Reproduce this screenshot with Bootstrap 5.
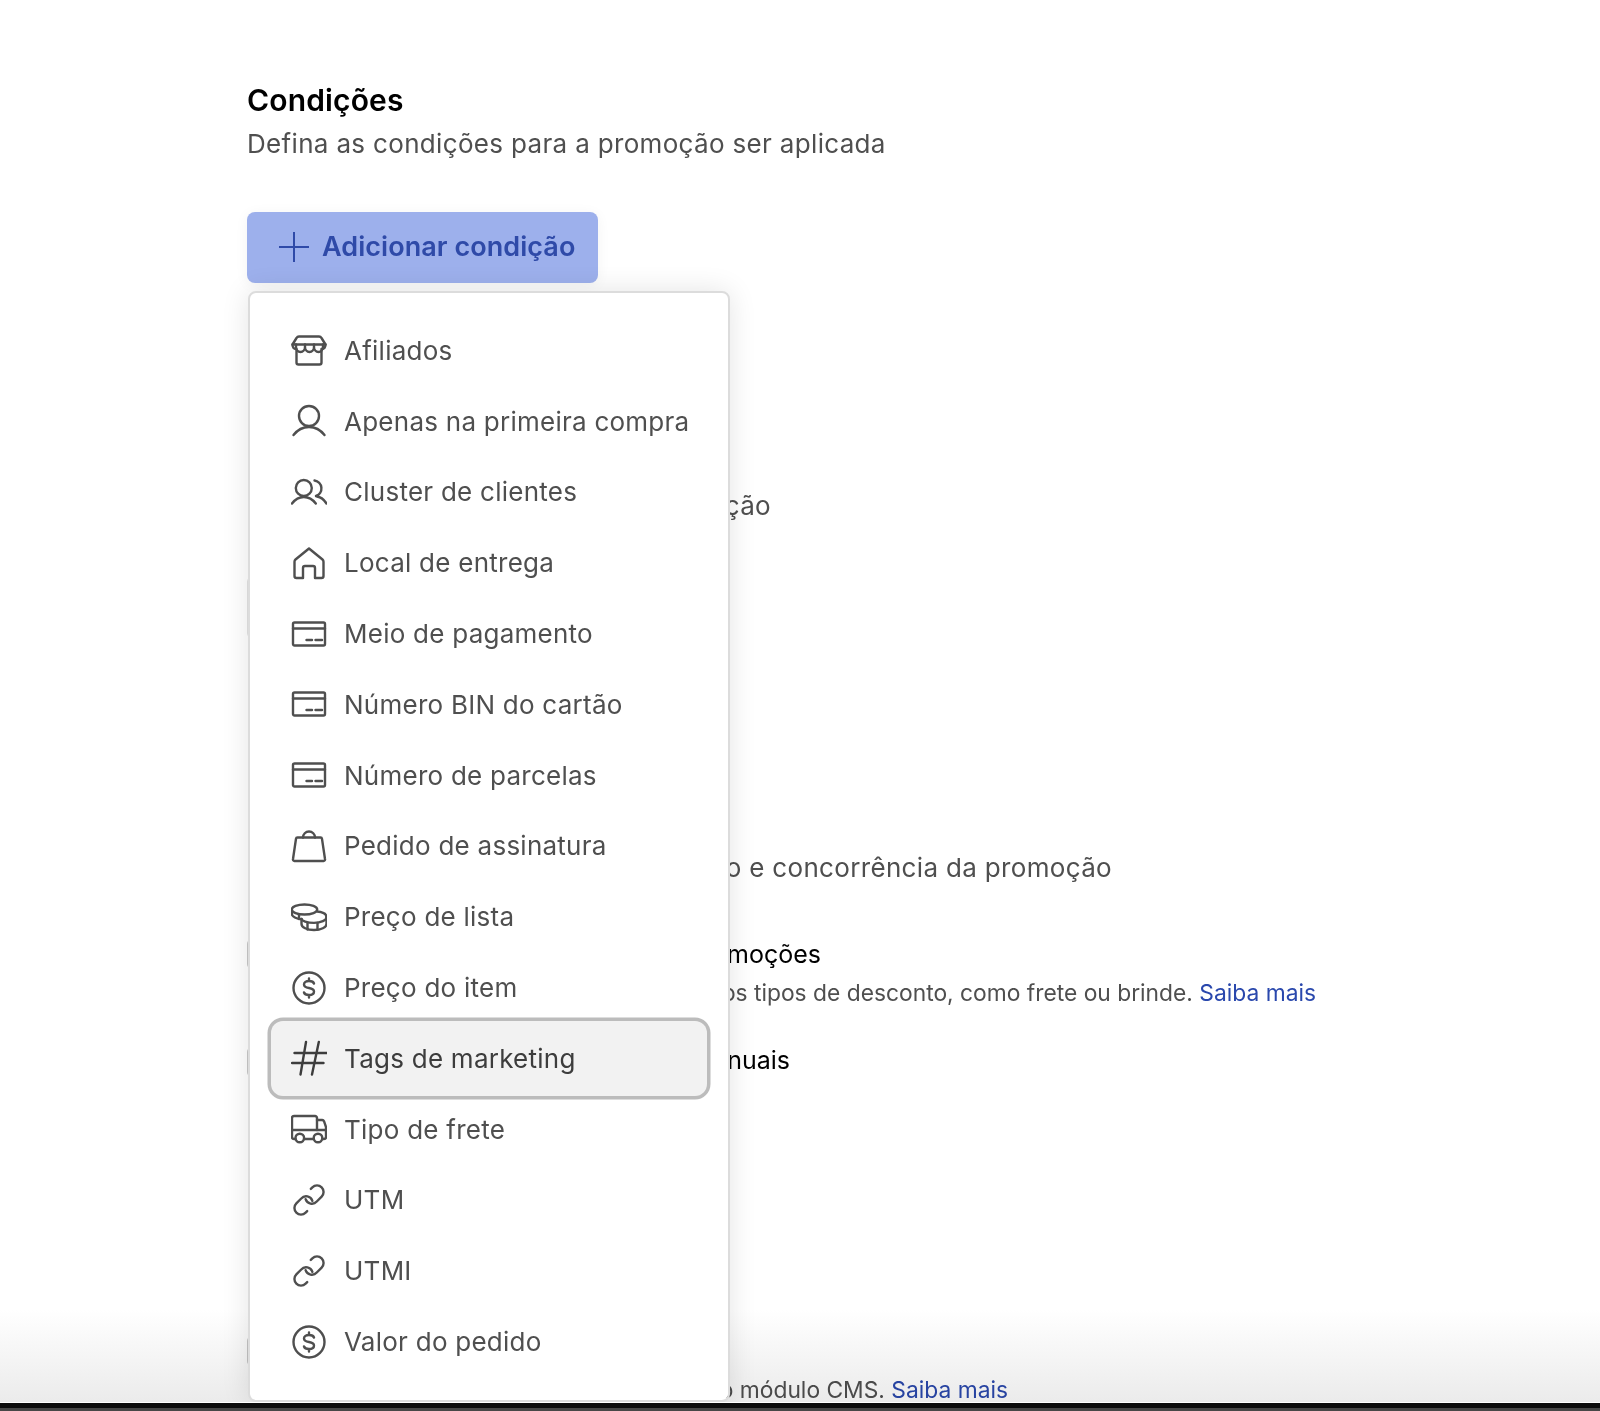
<!DOCTYPE html>
<html lang="pt-BR">
<head>
    <meta charset="UTF-8">
    <meta name="viewport" content="width=device-width, initial-scale=1.0">
    <title>Condições</title>
    <link href="https://cdn.jsdelivr.net/npm/bootstrap@5.3.0/dist/css/bootstrap.min.css" rel="stylesheet">
    <style>
        html, body { height: 100%; }
        body {
            font-family: "Inter", "Liberation Sans", sans-serif;
            color: #000;
            overflow: hidden;
        }
        .page-shell { height: 1411px; }
        .page-main { padding: 82px 0 0 247px; overflow: hidden; }
        .sec-title { font-size: 30px; line-height: 36px; font-weight: 600; letter-spacing: .15px; margin: 0; }
        .sec-sub { font-size: 26px; line-height: 36px; letter-spacing: .33px; color: #4f4f4f; margin: 8px 0 0; white-space: nowrap; }
        .add-wrap { margin-top: 50px; width: 351px; height: 71px; }
        .add-btn {
            width: 351px; height: 71px; padding: 0 0 1px 32px; gap: 13px;
            background: #9db0ec; border: 0; border-radius: 8px;
            color: #2f4aa8; font-size: 27px; font-weight: 600; letter-spacing: .05px;
            box-shadow: 0 2px 14px rgba(0,0,0,.05);
        }
        .cond-menu {
            top: 79px; left: 1px; width: 482px; height: 1111px;
            padding: 22px 23.5px 21px 22.5px; border: 2px solid #dcdcdc; border-radius: 8px;
            box-shadow: 0 0 28px rgba(0,0,0,.11);
            display: block;
        }
        .cond-item {
            height: 70.8px; padding: 0 0 0 18px; gap: 17.5px;
            color: #4f4f4f; font-size: 26px; letter-spacing: .25px; border-radius: 10px;
        }
        .cond-item svg { width: 36px; height: 36px; flex: none; fill: none; stroke: currentColor; stroke-width: 2.4; stroke-linecap: round; stroke-linejoin: round; }
        .cond-item.is-on {
            background: #f2f2f2; color: #3d3d3d;
            box-shadow: 0 0 0 2px #f2f2f2, 0 0 0 5.5px #bcbcbc;
        }
        .under-line { white-space: nowrap; overflow: hidden; text-align: right; }
        .under-title { font-size: 25px; line-height: 36px; color: #000; }
        .under-note { font-size: 22.8px; line-height: 32px; color: #4f4f4f; }
        .under-note a { color: #2a48ad; text-decoration: none; }
        .fake-input { width: 400px; height: 63px; margin-top: 52px; border: 2px solid #e3e3e3; border-radius: 6px; }
        .fake-check { width: 30px; height: 30px; border: 2px solid #c9c9c9; border-radius: 5px; flex: none; }
        .under-dur { width: 524px; margin-top: 205px; }
        .under-conc { width: 865px; margin-top: 211px; }
        .row-acum { margin-top: 50px; }
        .row-acum .fake-check { margin-top: 3px; }
        .row-acum .under-title { width: 528px; }
        .row-acum .under-note { width: 1023px; margin-top: 5px; }
        .row-manual { margin-top: 33px; }
        .row-manual .fake-check { margin-top: 5px; }
        .row-manual .under-title { width: 497px; }
        .row-cms { margin-top: 258px; }
        .row-cms .under-title { width: 200px; }
        .row-cms .under-note { width: 715px; margin-top: 7px; line-height: 22px; }
        .bottom-fade {
            left: 0; right: 0; bottom: 0; height: 92px;
            background: linear-gradient(to bottom, #fff, #ebebeb);
            mix-blend-mode: multiply;
            pointer-events: none;
        }
        .screen-edge { height: 9px; flex: none; background: linear-gradient(to bottom, #fff 0, #fff 1px, #0c0c0c 1px, #0c0c0c 6px, #474747 6px); }
    </style>
</head>
<body>
    <svg class="d-none" xmlns="http://www.w3.org/2000/svg">
        <symbol id="i-store" viewBox="0 0 36 36">
            <path d="M1.500 12.500 5.500 6A3 3 0 0 1 8 4.500H28a3 3 0 0 1 2.500 1.500L34.500 12.500Z"/>
            <path d="M1.500 12.500a3.500 4 0 0 0 3.500 4.500M34.500 12.500a3.500 4 0 0 1-3.500 4.500"/>
            <path d="M5 12.500V15a4.500 5 0 0 0 9 0V12.500M14 15a4.500 5 0 0 0 9 0V12.500M23 15a4.500 5 0 0 0 9 0V12.500"/>
            <path d="M5.500 17V30.500a2 2 0 0 0 2 2H28.500a2 2 0 0 0 2-2V17"/>
        </symbol>
        <symbol id="i-user" viewBox="0 0 36 36">
            <circle cx="18" cy="13" r="10"/>
            <path d="M2.500 32C6 27.500 12 24 18 24s12 3.500 15.500 8"/>
        </symbol>
        <symbol id="i-users" viewBox="0 0 36 36">
            <circle cx="12.800" cy="14" r="8"/>
            <path d="M1 29.500C4 25.500 8 23 12.800 23s9 2.500 12 6.500"/>
            <path d="M23.500 6.500a8 8 0 0 1 1.500 15.500"/>
            <path d="M26 22.500c3.500.5 7 3 9.500 7"/>
        </symbol>
        <symbol id="i-home" viewBox="0 0 36 36">
            <path d="M18 3.500 4.500 14.500a3 3 0 0 0-1 2.300V31a2 2 0 0 0 2 2H12V23a2 2 0 0 1 2-2h8a2 2 0 0 1 2 2V33h6.500a2 2 0 0 0 2-2V16.800a3 3 0 0 0-1-2.300Z"/>
        </symbol>
        <symbol id="i-card" viewBox="0 0 36 36">
            <rect x="2" y="6.500" width="32" height="23" rx="1.500"/>
            <path d="M2 12.500H34M15.500 24H21M24.500 24H31"/>
        </symbol>
        <symbol id="i-bag" viewBox="0 0 36 36">
            <path d="M6.500 9.500H29.500a1.500 1.500 0 0 1 1.500 1.300L34 31a1.500 1.500 0 0 1-1.500 2H3.500A1.500 1.500 0 0 1 2 31L5 10.800a1.500 1.500 0 0 1 1.500-1.300Z"/>
            <path d="M12 9.500a6 6 0 0 1 12 0"/>
        </symbol>
        <symbol id="i-coins" viewBox="0 0 36 36">
            <ellipse cx="13.500" cy="10.500" rx="12.700" ry="5"/>
            <path d="M.8 10.500V15c0 2.500 5 5 9.700 5.200"/>
            <path d="M8 15.500V20"/>
            <path d="M26 12.500c5.500.5 9.500 2.700 9.500 5.700 0 3.100-5.500 5.700-12.500 5.700S10.500 21.500 10.500 20"/>
            <path d="M35.500 18.200V25c0 3.300-5.500 6-12.500 6s-12.500-2.700-12.500-6V20"/>
            <path d="M16.500 24v6.500M26.500 24v6.500"/>
        </symbol>
        <symbol id="i-dollar" viewBox="0 0 36 36">
            <circle cx="18" cy="18" r="15.500"/>
            <path d="M23 13.500c-.5-1.500-2.500-2.500-5-2.500-3 0-5 1.500-5 3.500s2 3 5 3.500 5 1.500 5 3.500-2 3.500-5 3.500c-2.500 0-4.500-1-5-2.500M18 8.500V11M18 25v2.500"/>
        </symbol>
        <symbol id="i-hash" viewBox="0 0 36 36">
            <path d="M3.500 13H35.500M1 23H32.500M15 2 9.500 34.500M27.800 2 21 34.500"/>
        </symbol>
        <symbol id="i-truck" viewBox="0 0 36 36">
            <path d="M26 19V7a2 2 0 0 0-2-2H3a2 2 0 0 0-2 2V26a2 2 0 0 0 2 2H4.500"/>
            <path d="M1 19H35M13 28H22.500"/>
            <circle cx="8.800" cy="27" r="4.300"/>
            <circle cx="27" cy="27" r="4.300"/>
            <path d="M26 9h5a2 2 0 0 1 2 1.200L35 16V26a2 2 0 0 1-2 2H31.500"/>
        </symbol>
        <symbol id="i-link" viewBox="0 0 256 256">
            <path stroke-width="17" d="M141 49l11-11a46.600 46.600 0 0 1 66 66l-34.800 34.700A46.600 46.600 0 0 1 104 122"/>
            <path stroke-width="17" d="M115 207l-11 11a46.600 46.600 0 0 1-66-66l34.800-34.700A46.600 46.600 0 0 1 152 134"/>
        </symbol>
    </svg>

    <div class="page-shell d-flex flex-column">
        <div class="page-main flex-grow-1 position-relative">
            <h2 class="sec-title">Condições</h2>
            <p class="sec-sub">Defina as condições para a promoção ser aplicada</p>

            <div class="add-wrap position-relative">
                <button type="button" class="add-btn btn d-flex align-items-center">
                    <svg width="30" height="30" viewBox="0 0 30 30" fill="none" stroke="currentColor" stroke-width="2"><path d="M15 0V30M0 15H30"/></svg>
                    <span>Adicionar condição</span>
                </button>

                <ul class="cond-menu dropdown-menu show list-unstyled">
                    <li><a class="cond-item dropdown-item d-flex align-items-center" href="#"><svg><use href="#i-store"/></svg>Afiliados</a></li>
                    <li><a class="cond-item dropdown-item d-flex align-items-center" href="#"><svg><use href="#i-user"/></svg>Apenas na primeira compra</a></li>
                    <li><a class="cond-item dropdown-item d-flex align-items-center" href="#"><svg><use href="#i-users"/></svg>Cluster de clientes</a></li>
                    <li><a class="cond-item dropdown-item d-flex align-items-center" href="#"><svg><use href="#i-home"/></svg>Local de entrega</a></li>
                    <li><a class="cond-item dropdown-item d-flex align-items-center" href="#"><svg><use href="#i-card"/></svg>Meio de pagamento</a></li>
                    <li><a class="cond-item dropdown-item d-flex align-items-center" href="#"><svg><use href="#i-card"/></svg>Número BIN do cartão</a></li>
                    <li><a class="cond-item dropdown-item d-flex align-items-center" href="#"><svg><use href="#i-card"/></svg>Número de parcelas</a></li>
                    <li><a class="cond-item dropdown-item d-flex align-items-center" href="#"><svg><use href="#i-bag"/></svg>Pedido de assinatura</a></li>
                    <li><a class="cond-item dropdown-item d-flex align-items-center" href="#"><svg><use href="#i-coins"/></svg>Preço de lista</a></li>
                    <li><a class="cond-item dropdown-item d-flex align-items-center" href="#"><svg><use href="#i-dollar"/></svg>Preço do item</a></li>
                    <li><a class="cond-item is-on dropdown-item d-flex align-items-center" href="#"><svg><use href="#i-hash"/></svg>Tags de marketing</a></li>
                    <li><a class="cond-item dropdown-item d-flex align-items-center" href="#"><svg><use href="#i-truck"/></svg>Tipo de frete</a></li>
                    <li><a class="cond-item dropdown-item d-flex align-items-center" href="#"><svg><use href="#i-link"/></svg>UTM</a></li>
                    <li><a class="cond-item dropdown-item d-flex align-items-center" href="#"><svg><use href="#i-link"/></svg>UTMI</a></li>
                    <li><a class="cond-item dropdown-item d-flex align-items-center" href="#"><svg><use href="#i-dollar"/></svg>Valor do pedido</a></li>
                </ul>
            </div>

            <!-- secoes que ficam atras do menu -->
            <div class="under-line under-dur sec-sub">Defina o período de ativação</div>
            <div class="fake-input"></div>
            <div class="under-line under-conc sec-sub">Defina as regras de uso e concorrência da promoção</div>
            <div class="row-acum d-flex gap-3">
                <div class="fake-check"></div>
                <div>
                    <div class="under-line under-title">Acumular com outras promoções</div>
                    <div class="under-line under-note">Permite acumular com outros tipos de desconto, como frete ou brinde. <a href="#">Saiba mais</a></div>
                </div>
            </div>
            <div class="row-manual d-flex gap-3">
                <div class="fake-check"></div>
                <div class="under-line under-title">Acumular com preços manuais</div>
            </div>
            <div class="row-cms d-flex gap-3">
                <div class="fake-check"></div>
                <div>
                    <div class="under-line under-title">Exibir no CMS</div>
                    <div class="under-line under-note">Disponível para uso no módulo CMS. <a href="#">Saiba mais</a></div>
                </div>
            </div>

            <div class="bottom-fade position-absolute"></div>
        </div>
        <div class="screen-edge"></div>
    </div>
    <script src="https://cdn.jsdelivr.net/npm/bootstrap@5.3.0/dist/js/bootstrap.bundle.min.js"></script>
</body>
</html>
